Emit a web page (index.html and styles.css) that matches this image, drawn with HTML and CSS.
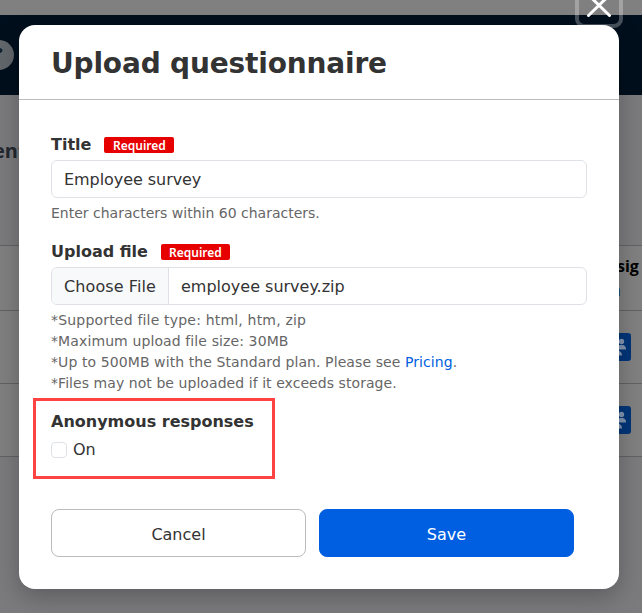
FILE: index.html
```html
<!DOCTYPE html>
<html lang="en">
<head>
<meta charset="utf-8">
<title>Upload questionnaire</title>
<link rel="stylesheet" href="styles.css">
</head>
<body>
<div class="page">
  <div class="strip"></div>
  <div class="navbar"><span class="round">?</span></div>
  <div class="page-title">ent</div>
  <div class="table">
    <div class="row head"><div class="assign"><b>Assig</b><span>n</span></div></div>
    <div class="row"><span class="people"><svg viewBox="0 0 28 28"><circle cx="18.5" cy="8.500" r="2.700"/><path d="M14 16.500c0-3 1.500-4.500 3.500-4.500h2c2 0 3.500 1.500 3.500 4.500z"/><circle cx="9.500" cy="8.500" r="2.700"/><path d="M9 22.500c0-3 2-5 5-5s5 2 5 5z"/></svg></span></div>
    <div class="row"><span class="people"><svg viewBox="0 0 28 28"><circle cx="18.5" cy="8.500" r="2.700"/><path d="M14 16.500c0-3 1.500-4.500 3.500-4.500h2c2 0 3.500 1.500 3.500 4.500z"/><circle cx="9.500" cy="8.500" r="2.700"/><path d="M9 22.500c0-3 2-5 5-5s5 2 5 5z"/></svg></span></div>
  </div>
</div>
<div class="close"><svg viewBox="0 0 48 48"><path d="M13.500 15l21 20.500M34.500 15l-21 20.500"/></svg></div>
<main class="modal">
  <header class="modal-head"><h1>Upload questionnaire</h1></header>
  <form class="modal-body">
    <div class="label-line"><label class="label">Title</label><span class="badge">Required</span></div>
    <div class="input"><span class="value">Employee survey</span></div>
    <p class="hint">Enter characters within 60 characters.</p>
    <div class="label-line second"><label class="label">Upload file</label><span class="badge b2">Required</span></div>
    <div class="input file"><span class="choose">Choose File</span><span class="filename">employee survey.zip</span></div>
    <div class="notes">
      <p class="n1">*Supported file type: html, htm, zip</p>
      <p class="n2">*Maximum upload file size: 30MB</p>
      <p class="n3">*Up to 500MB with the Standard plan. Please see <a>Pricing</a>.</p>
      <p class="n4">*Files may not be uploaded if it exceeds storage.</p>
    </div>
    <section class="anonymous">
      <div class="label">Anonymous responses</div>
      <div class="check"><span class="box"></span><span class="on">On</span></div>
    </section>
    <div class="actions"><span class="btn cancel">Cancel</span><span class="btn save">Save</span></div>
  </form>
</main>
</body>
</html>
```
FILE: styles.css
```css
* { box-sizing: border-box; }
body {
  margin: 0;
  width: 642px;
  height: 613px;
  overflow: hidden;
  position: relative;
  background: #7b7b7e;
  color: #333;
  font: 16px/24px Verdana, "DejaVu Sans", sans-serif;
}
h1, p { margin: 0; }
.page { height: 613px; }
.strip { height: 15px; background: #808080; }
.navbar { height: 80px; padding-top: 25px; background: #000f1d; }
.round {
  display: block;
  width: 30px;
  height: 30px;
  margin-left: -16px;
  border-radius: 50%;
  background: #62676c;
  color: #111a24;
  font: bold 15px/25px "Open Sans", sans-serif;
  text-align: center;
}
.page-title {
  height: 150px;
  padding-top: 42px;
  margin-left: -7px;
  color: #22272f;
  font: bold 20px/27px "Open Sans", sans-serif;
}
.table { background: #808080; border-top: 1px solid #626264; }
.row {
  height: 73px;
  border-bottom: 1px solid #626264;
  display: flex;
  align-items: center;
  justify-content: flex-end;
}
.head { height: 65px; }
.assign {
  width: 50px;
  margin-right: -2px;
  color: #000;
  font: 16px/24px "Open Sans", sans-serif;
  display: flex;
  flex-direction: column;
  padding-bottom: 1px;
}
.assign b { margin-left: 4px; }
.assign span { margin-left: 17px; color: #002b68; }
.people {
  width: 28px;
  height: 28px;
  margin-right: 11px;
  border-radius: 3px;
  background: #003578;
}
.people svg { display: block; fill: #8295b1; }
.close {
  position: absolute;
  left: 575px;
  top: -20px;
  width: 48px;
  height: 48px;
  border: 4px solid rgba(255, 255, 255, .28);
  border-radius: 9px;
}
.close svg {
  position: absolute;
  left: -4px;
  top: -4px;
  width: 48px;
  height: 48px;
  fill: none;
  stroke: #fff;
  stroke-width: 3;
  stroke-linecap: round;
}
.modal {
  position: absolute;
  left: 19px;
  top: 25px;
  width: 600px;
  height: 564px;
  border-radius: 16px;
  background: #fff;
  box-shadow: 0 8px 24px rgba(0, 0, 0, .25);
}
.modal-head {
  height: 75px;
  padding: 19px 32px 0;
  border-bottom: 1px solid #bbb;
}
h1 { font-size: 28px; line-height: 40px; letter-spacing: -.17px; white-space: nowrap; }
.modal-body { padding: 33px 32px 0; }
.label-line { display: flex; align-items: center; height: 24px; }
.label { font-weight: bold; white-space: nowrap; }
.badge {
  width: 70px;
  height: 16px;
  margin-left: 13px;
  border-radius: 2px;
  background: #e60000;
  color: #fff;
  font: 600 12px/18px "Noto Sans", sans-serif;
  text-align: center;
}
.b2 { width: 69px; }
.input {
  height: 38px;
  margin-top: 3px;
  width: 536px;
  border: 1px solid #dee2e6;
  border-radius: 6px;
  padding: 7px 12px;
  display: flex;
  white-space: nowrap;
}
.value { letter-spacing: -.06px; }
.hint, .notes { color: #666; font-size: 14px; line-height: 21px; white-space: nowrap; }
.hint { margin-top: 5px; }
.second { margin-top: 16px; }
.file { margin-top: 3px; padding: 0; overflow: hidden; }
.choose {
  width: 117px;
  padding: 7px 12px;
  letter-spacing: .1px;
  background: #f8f9fa;
  border-right: 1px solid #dee2e6;
}
.filename { padding: 7px 12px; }
.notes { margin-top: 5px; }
.notes a { color: #005fe0; }
.n1 { letter-spacing: .19px; }
.n2 { letter-spacing: .11px; }
.n3 { letter-spacing: .09px; }
.n4 { letter-spacing: .06px; }
.anonymous {
  width: 242px;
  height: 81px;
  margin: 4px 0 0 -18px;
  padding: 9px 15px;
  border: 3px solid #ff4343;
}
.check { display: flex; align-items: center; height: 24px; margin-top: 4px; }
.box { width: 16px; height: 16px; border: 1px solid #dee2e6; border-radius: 4px; }
.on { margin-left: 6px; }
.actions { display: flex; gap: 13px; margin-top: 30px; }
.btn {
  width: 255px;
  height: 48px;
  border: 1px solid #bbb;
  border-radius: 8px;
  text-align: center;
  line-height: 50px;
}
.save { border-color: #005fe0; background: #005fe0; color: #fff; }
```
